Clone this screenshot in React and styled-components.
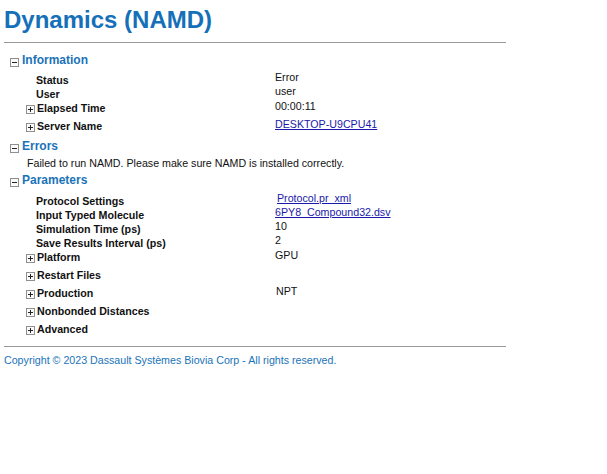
import styled, { createGlobalStyle } from "styled-components";

const GlobalStyle = createGlobalStyle`
  body {
    margin: 0;
    background: #fff;
    font-family: "Liberation Sans", Arial, sans-serif;
    color: #111;
  }
`;

const Page = styled.div`
  padding: 6px 4px 0 4px;
  width: 502px;
`;

const Title = styled.h1`
  margin: 0;
  font-size: 24px;
  line-height: 28px;
  font-weight: bold;
  color: #1570b9;
`;

const Rule = styled.hr`
  margin: ${(p) => p.$top || 0}px 0 0 0;
  border: 0;
  border-top: 1px solid #999;
  height: 0;
`;

const Section = styled.div`
  padding-bottom: 1px;
`;

const Header = styled.div`
  display: flex;
  align-items: center;
  height: 18px;
  padding-left: 6px;
  gap: 3px;
  font-size: 12px;
  font-weight: bold;
  color: #1a73b8;

  svg {
    margin-top: 5px;
  }
`;

const Body = styled.div`
  padding-top: ${(p) => p.$top || 0}px;
  margin-left: 22px;
`;

const Row = styled.div`
  display: grid;
  grid-template-columns: 249px 1fr;
  align-items: start;
  height: ${(p) => (p.$expand ? 18 : 14)}px;
  font-size: 10.67px;
`;

const Label = styled.div`
  display: flex;
  align-items: center;
  gap: 2px;
  padding-left: ${(p) => (p.$expand ? 0 : 10)}px;
  padding-top: ${(p) => (p.$expand ? 0 : 1)}px;
  line-height: ${(p) => (p.$expand ? 16 : 14)}px;
  font-weight: bold;

  svg {
    margin-top: 2px;
  }
`;

const Value = styled.div`
  line-height: ${(p) => (p.$expand ? 12 : 10)}px;
  padding-left: ${(p) => p.$shift || 0}px;
  white-space: nowrap;

  a {
    color: #1a1aaa;
    text-decoration: underline;
  }
`;

const Message = styled.div`
  margin-left: 23px;
  height: 14px;
  line-height: 14px;
  font-size: 10.67px;
`;

const Footer = styled.div`
  margin-top: 6px;
  font-size: 10.67px;
  line-height: 14px;
  color: #1a73b8;
`;

const Toggle = ({ open }) => (
  <svg width="9" height="9" viewBox="0 0 9 9">
    <rect x="0.5" y="0.5" width="8" height="8" fill="#fbfbfb" stroke="#8f8f8f" />
    <line x1="2" y1="4.5" x2="7" y2="4.5" stroke="#222" />
    {!open && <line x1="4.5" y1="2" x2="4.5" y2="7" stroke="#222" />}
  </svg>
);

const Item = ({ label, value, expand, shift }) => (
  <Row $expand={expand}>
    <Label $expand={expand}>
      {expand && <Toggle />}
      {label}
    </Label>
    <Value $expand={expand} $shift={shift}>
      {value}
    </Value>
  </Row>
);

export default function App() {
  return (
    <Page>
      <GlobalStyle />
      <Title>Dynamics (NAMD)</Title>
      <Rule $top={8} />

      <Section style={{ marginTop: 8 }}>
        <Header>
          <Toggle open />
          Information
        </Header>
        <Body $top={3}>
          <Item label="Status" value="Error" />
          <Item label="User" value="user" />
          <Item label="Elapsed Time" value="00:00:11" expand />
          <Item label="Server Name" value={<a href="#">DESKTOP-U9CPU41</a>} expand />
        </Body>
      </Section>

      <Section>
        <Header>
          <Toggle open />
          Errors
        </Header>
        <Message style={{ marginTop: 1 }}>
          Failed to run NAMD. Please make sure NAMD is installed correctly.
        </Message>
      </Section>

      <Section>
        <Header>
          <Toggle open />
          Parameters
        </Header>
        <Body $top={4}>
          <Item label="Protocol Settings" value={<a href="#">Protocol.pr_xml</a>} shift={2} />
          <Item label="Input Typed Molecule" value={<a href="#">6PY8_Compound32.dsv</a>} shift={-2} />
          <Item label="Simulation Time (ps)" value="10" />
          <Item label="Save Results Interval (ps)" value="2" />
          <Item label="Platform" value="GPU" expand />
          <Item label="Restart Files" value="" expand />
          <Item label="Production" value="NPT" expand shift={1} />
          <Item label="Nonbonded Distances" value="" expand />
          <Item label="Advanced" value="" expand />
        </Body>
      </Section>

      <Rule $top={6} />
      <Footer>Copyright © 2023 Dassault Systèmes Biovia Corp - All rights reserved.</Footer>
    </Page>
  );
}
